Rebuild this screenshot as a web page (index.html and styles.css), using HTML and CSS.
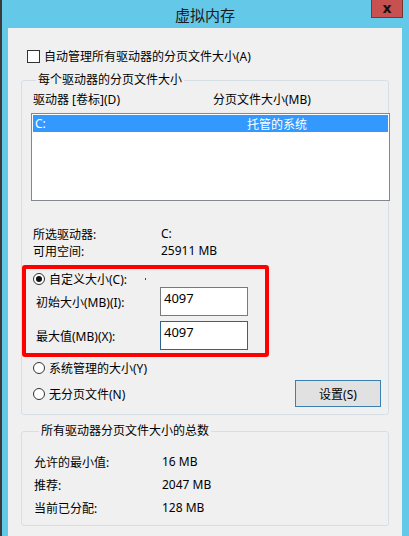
FILE: index.html
```html
<!DOCTYPE html>
<html>
<head>
    <meta charset="utf-8">
    <title>虚拟内存</title>
    <link rel="stylesheet" href="styles.css">
</head>
<body>
    <div class="window">
        <div class="titlebar">
            <span></span>
            <span class="title">虚拟内存</span>
            <span class="close">x</span>
        </div>

        <div class="client">
            <div class="auto-row">
                <span class="checkbox"></span>
                <span>自动管理所有驱动器的分页文件大小(A)</span>
            </div>

            <fieldset class="group group-drives">
                <legend>每个驱动器的分页文件大小</legend>

                <div class="list-head">
                    <span class="col-drive">驱动器 [卷标](D)</span>
                    <span>分页文件大小(MB)</span>
                </div>

                <div class="listbox">
                    <div class="list-row selected">
                        <span class="col-drive">C:</span>
                        <span>托管的系统</span>
                    </div>
                </div>

                <div class="info-row first">
                    <span class="info-label">所选驱动器:</span>
                    <span>C:</span>
                </div>
                <div class="info-row">
                    <span class="info-label">可用空间:</span>
                    <span>25911 MB</span>
                </div>

                <div class="highlight">
                    <div class="radio-row">
                        <span class="radio checked"></span>
                        <span>自定义大小(C):</span>
                        <span class="speck"></span>
                    </div>
                    <div class="field-row">
                        <span class="field-label">初始大小(MB)(I):</span>
                        <div class="field">4097</div>
                    </div>
                    <div class="field-row">
                        <span class="field-label">最大值(MB)(X):</span>
                        <div class="field hover">4097</div>
                    </div>
                </div>

                <div class="radio-row plain">
                    <span class="radio"></span>
                    <span>系统管理的大小(Y)</span>
                </div>
                <div class="bottom-row">
                    <div class="radio-row">
                        <span class="radio"></span>
                        <span>无分页文件(N)</span>
                    </div>
                    <button class="btn">设置(S)</button>
                </div>
            </fieldset>

            <fieldset class="group group-total">
                <legend>所有驱动器分页文件大小的总数</legend>

                <div class="total-row">
                    <span class="total-label">允许的最小值:</span>
                    <span>16 MB</span>
                </div>
                <div class="total-row">
                    <span class="total-label">推荐:</span>
                    <span>2047 MB</span>
                </div>
                <div class="total-row">
                    <span class="total-label">当前已分配:</span>
                    <span>128 MB</span>
                </div>
            </fieldset>
        </div>
    </div>
</body>
</html>
```

FILE: styles.css
```css
body {
    margin: 0;
    font-family: "Noto Sans", "Noto Sans CJK SC", sans-serif;
    font-size: 12px;
    color: #000;
}

.window {
    width: 409px;
    height: 536px;
    box-sizing: border-box;
    background: #64c8e9;
    border-left: 2px solid #3b3b3b;
    padding: 0 7px 0 6px;
    display: flex;
    flex-direction: column;
    overflow: hidden;
}

.titlebar {
    height: 28px;
    flex: none;
    display: grid;
    grid-template-columns: 1fr auto 1fr;
    align-items: start;
}

.title {
    font-family: "Noto Sans CJK SC", sans-serif;
    font-size: 15px;
    line-height: 18px;
    margin-top: 6px;
    color: #1a1a1a;
}

.close {
    justify-self: end;
    width: 32px;
    height: 18px;
    box-sizing: border-box;
    background: #c75050;
    border: 1px solid #7a3232;
    border-top: none;
    margin-right: -1px;
    display: flex;
    align-items: center;
    justify-content: center;
    font-family: "DejaVu Sans", sans-serif;
    font-weight: bold;
    font-size: 14px;
    line-height: 1;
    padding-bottom: 2px;
    color: #111;
}

.client {
    flex: 1;
    background: #f0f0f0;
    padding: 20px 13px 0;
}

.auto-row {
    display: flex;
    align-items: center;
    height: 16px;
    margin-left: 6px;
    gap: 4px;
}

.checkbox {
    width: 13px;
    height: 13px;
    box-sizing: border-box;
    border: 1px solid #333;
    background: #fff;
}

/* group boxes */
.group {
    margin: 9px 0 0;
    padding: 0 0 0 9px;
    border: 1px solid #d5dfe5;
    border-radius: 3px;
    min-width: 0;
}

.group legend {
    padding: 0 2px;
    margin-left: 5px;
    line-height: 14px;
    color: #000;
}

.list-head,
.list-row {
    display: flex;
    height: 16px;
    align-items: center;
}

.list-head {
    margin-top: 4px;
    padding-left: 2px;
}

.col-drive {
    width: 180px;
}

.listbox {
    width: 359px;
    height: 88px;
    box-sizing: border-box;
    margin-top: 6px;
    border: 1px solid #828790;
    background: #fff;
    padding: 1px;
}

.list-row {
    height: 17px;
    padding-left: 2px;
}

.list-row .col-drive {
    width: 212px;
}

.selected {
    background: #3399ff;
    color: #fff;
}

.info-row {
    display: flex;
    height: 17px;
    align-items: center;
    padding-left: 2px;
}

.info-row.first {
    margin-top: 24px;
}

.info-label {
    width: 128px;
}

/* red marker round the custom size options */
.highlight {
    width: 247px;
    box-sizing: border-box;
    margin: 6px 0 0 -9px;
    border: 4px solid #ff0000;
    border-radius: 3px;
    padding: 2px 0 3px 7px;
}

.radio-row {
    display: flex;
    align-items: center;
    height: 16px;
    gap: 4px;
}

.radio-row.plain {
    margin-top: 3px;
    padding-left: 2px;
}

.radio {
    width: 12px;
    height: 12px;
    box-sizing: border-box;
    border: 1px solid #333;
    border-radius: 50%;
    background: #fff;
    display: flex;
    align-items: center;
    justify-content: center;
}

.radio.checked::after {
    content: "";
    width: 6px;
    height: 6px;
    border-radius: 50%;
    background: #111;
}

.speck {
    width: 1px;
    height: 2px;
    background: #444;
    margin-left: 14px;
}

.field-row {
    display: flex;
    align-items: center;
    margin-left: 3px;
}

.field-row + .field-row {
    margin-top: 5px;
}

.field-label {
    width: 124px;
}

.field {
    width: 88px;
    height: 29px;
    box-sizing: border-box;
    border: 1px solid #7a7a7a;
    background: #fff;
    padding: 1px 3px;
    font-size: 13px;
    line-height: 18px;
}

.field.hover {
    border-color: #2f638f;
}

.bottom-row {
    display: flex;
    align-items: center;
    justify-content: space-between;
    margin-top: 4px;
    padding-left: 2px;
    padding-right: 7px;
    padding-bottom: 7px;
}

.btn {
    width: 86px;
    height: 27px;
    border: 1px solid #3c7fb1;
    background: #e1e1e1;
    font-family: "Noto Sans", "Noto Sans CJK SC", sans-serif;
    font-size: 12px;
    color: #000;
    padding: 0;
}

.group-total {
    padding-left: 12px;
    padding-bottom: 6px;
}

.total-row {
    display: flex;
    height: 23px;
    align-items: center;
}

.total-row:first-of-type {
    margin-top: 12px;
}

.total-label {
    width: 128px;
}
```
